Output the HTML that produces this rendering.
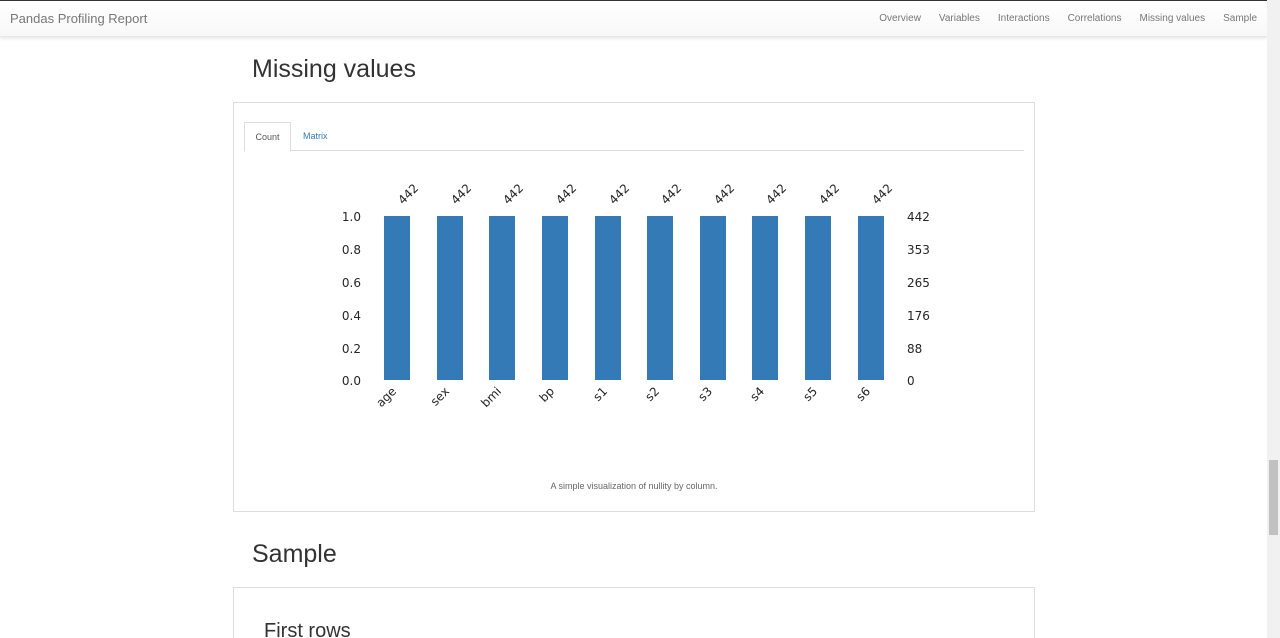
<!DOCTYPE html>
<html style="overflow:hidden;height:638px"><head><style>
body{margin:0;width:1280px;height:638px;overflow:hidden;background:#fff;font-family:"Liberation Sans",sans-serif;color:#333;position:relative}
.nav{position:absolute;left:0;top:0;width:1267px;height:35px;border-top:1px solid #333;background:linear-gradient(#fff,#f8f8f8);box-shadow:0 1px 4px rgba(0,0,0,.12);border-bottom:1px solid #e7e7e7}
.brand{position:absolute;left:10px;top:10px;font-size:13px;color:#777}
.links{position:absolute;right:10px;top:12px;font-size:10px;color:#777}
.links span{margin-left:18px}
.sb{position:absolute;right:0;top:0;width:13px;height:638px;background:#f1f1f1}
.thumb{position:absolute;right:2px;top:460px;width:9px;height:75px;background:#c1c1c1}
h2{position:absolute;left:252px;margin:0;font-weight:400;font-size:25px;color:#333}
.panel{position:absolute;left:233px;width:800px;border:1px solid #ddd;background:#fff}
.tabs{position:absolute;left:10px;top:19px;width:780px;height:28px;border-bottom:1px solid #ddd;font-size:9px}
.tab1{position:absolute;left:0;top:0;width:45px;height:28px;border:1px solid #ddd;border-bottom-color:#fff;text-align:center;line-height:28px;background:#fff;color:#555}
.tab2{position:absolute;left:59px;top:0;line-height:28px;color:#337ab7}
.cap{position:absolute;left:0;width:800px;top:378px;text-align:center;font-size:9px;color:#666}
</style></head><body>
<div class="nav"><div class="brand">Pandas Profiling Report</div>
<div class="links"><span>Overview</span><span>Variables</span><span>Interactions</span><span>Correlations</span><span>Missing values</span><span>Sample</span></div></div>
<div class="sb"><div class="thumb"></div></div>
<h2 style="top:55px">Missing values</h2>
<div class="panel" style="top:102px;height:408px">
<div class="tabs"><div class="tab1">Count</div><div class="tab2">Matrix</div></div>
<div class="cap">A simple visualization of nullity by column.</div>
</div>
<svg style="position:absolute;left:0;top:0" width="1280" height="638" font-family="DejaVu Sans, sans-serif" font-size="12" fill="#262626">
<g fill="#337ab7">
<rect x="384" y="216" width="26" height="164"/><rect x="437" y="216" width="26" height="164"/><rect x="489" y="216" width="26" height="164"/><rect x="542" y="216" width="26" height="164"/><rect x="595" y="216" width="26" height="164"/><rect x="647" y="216" width="26" height="164"/><rect x="700" y="216" width="26" height="164"/><rect x="752" y="216" width="26" height="164"/><rect x="805" y="216" width="26" height="164"/><rect x="858" y="216" width="26" height="164"/>
</g>
<g text-anchor="end"><text x="361" y="221">1.0</text><text x="361" y="254">0.8</text><text x="361" y="287">0.6</text><text x="361" y="320">0.4</text><text x="361" y="353">0.2</text><text x="361" y="385">0.0</text></g>
<g><text x="907" y="221">442</text><text x="907" y="254">353</text><text x="907" y="287">265</text><text x="907" y="320">176</text><text x="907" y="353">88</text><text x="907" y="385">0</text></g>
<g>
<text transform="translate(403,205) rotate(-45)">442</text><text transform="translate(456,205) rotate(-45)">442</text><text transform="translate(508,205) rotate(-45)">442</text><text transform="translate(561,205) rotate(-45)">442</text><text transform="translate(614,205) rotate(-45)">442</text><text transform="translate(666,205) rotate(-45)">442</text><text transform="translate(719,205) rotate(-45)">442</text><text transform="translate(771,205) rotate(-45)">442</text><text transform="translate(824,205) rotate(-45)">442</text><text transform="translate(877,205) rotate(-45)">442</text>
</g>
<g text-anchor="end">
<text transform="translate(397,392) rotate(-45)">age</text><text transform="translate(450,392) rotate(-45)">sex</text><text transform="translate(502,392) rotate(-45)">bmi</text><text transform="translate(555,392) rotate(-45)">bp</text><text transform="translate(608,392) rotate(-45)">s1</text><text transform="translate(660,392) rotate(-45)">s2</text><text transform="translate(713,392) rotate(-45)">s3</text><text transform="translate(765,392) rotate(-45)">s4</text><text transform="translate(818,392) rotate(-45)">s5</text><text transform="translate(871,392) rotate(-45)">s6</text>
</g>
</svg>
<h2 style="top:540px">Sample</h2>
<div class="panel" style="top:587px;height:60px"><div style="position:absolute;left:30px;top:32px;font-size:20px">First rows</div></div>
</body></html>
